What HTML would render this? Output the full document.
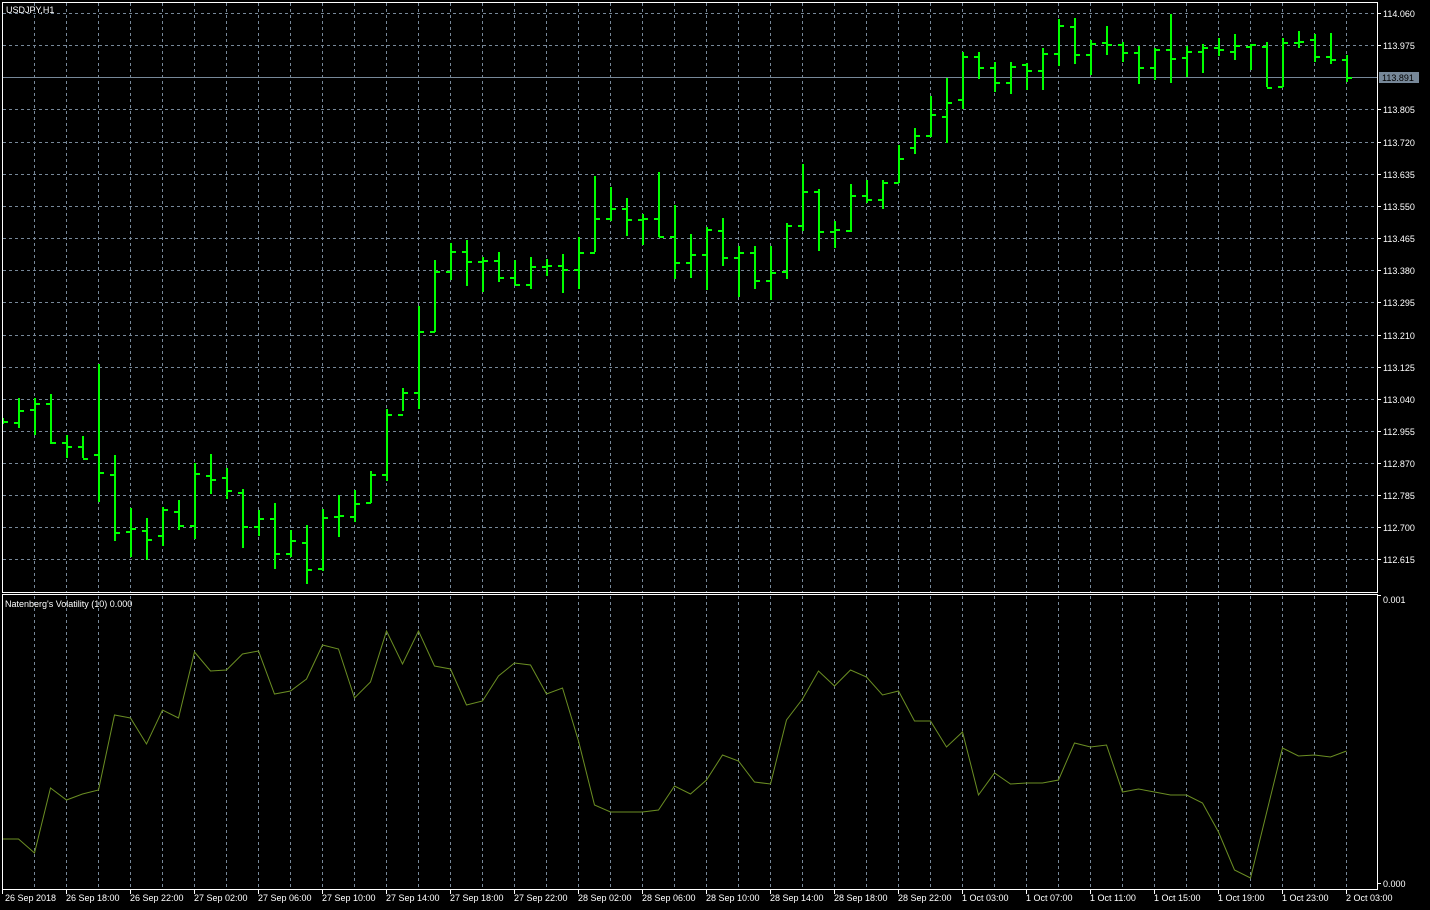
<!DOCTYPE html>
<html><head><meta charset="utf-8"><style>
html,body{margin:0;padding:0;background:#000;}
svg{display:block}
text{font-family:"Liberation Sans",sans-serif;font-size:9px;fill:#fff}
</style></head><body>
<svg width="1430" height="910" viewBox="0 0 1430 910" xmlns="http://www.w3.org/2000/svg">
<rect width="1430" height="910" fill="#000"/>
<defs><clipPath id="mc"><rect x="3" y="3" width="1374" height="589"/></clipPath>
<clipPath id="ic"><rect x="3" y="595" width="1374" height="294"/></clipPath></defs>
<!-- vertical grid -->
<g stroke="#778899" stroke-width="1" stroke-dasharray="3,3" shape-rendering="crispEdges">
<path d="M34.5 3V592M66.5 3V592M98.5 3V592M130.5 3V592M162.5 3V592M194.5 3V592M226.5 3V592M258.5 3V592M290.5 3V592M322.5 3V592M354.5 3V592M386.5 3V592M418.5 3V592M450.5 3V592M482.5 3V592M514.5 3V592M546.5 3V592M578.5 3V592M610.5 3V592M642.5 3V592M674.5 3V592M706.5 3V592M738.5 3V592M770.5 3V592M802.5 3V592M834.5 3V592M866.5 3V592M898.5 3V592M930.5 3V592M962.5 3V592M994.5 3V592M1026.5 3V592M1058.5 3V592M1090.5 3V592M1122.5 3V592M1154.5 3V592M1186.5 3V592M1218.5 3V592M1250.5 3V592M1282.5 3V592M1314.5 3V592M1346.5 3V592"/>
<path d="M34.5 596V889M66.5 596V889M98.5 596V889M130.5 596V889M162.5 596V889M194.5 596V889M226.5 596V889M258.5 596V889M290.5 596V889M322.5 596V889M354.5 596V889M386.5 596V889M418.5 596V889M450.5 596V889M482.5 596V889M514.5 596V889M546.5 596V889M578.5 596V889M610.5 596V889M642.5 596V889M674.5 596V889M706.5 596V889M738.5 596V889M770.5 596V889M802.5 596V889M834.5 596V889M866.5 596V889M898.5 596V889M930.5 596V889M962.5 596V889M994.5 596V889M1026.5 596V889M1058.5 596V889M1090.5 596V889M1122.5 596V889M1154.5 596V889M1186.5 596V889M1218.5 596V889M1250.5 596V889M1282.5 596V889M1314.5 596V889M1346.5 596V889"/>
<path d="M3 13.5H1377M3 45.5H1377M3 109.5H1377M3 142.5H1377M3 174.5H1377M3 206.5H1377M3 238.5H1377M3 270.5H1377M3 302.5H1377M3 335.5H1377M3 367.5H1377M3 399.5H1377M3 431.5H1377M3 463.5H1377M3 495.5H1377M3 527.5H1377M3 559.5H1377"/>
</g>
<!-- current price line -->
<path d="M3 77.5H1377" stroke="#778899" stroke-width="1" shape-rendering="crispEdges"/>
<!-- bars -->
<g clip-path="url(#mc)">
<path fill="none" stroke="#00ff00" stroke-width="2" shape-rendering="crispEdges" d="
M3 418V424M-2 421h5M3 422h5
M19 398V428M14 423h5M19 411h5
M35 398V435M30 410h5M35 404h5
M51 394V444M46 404h5M51 443h5
M67 435V458M62 443h5M67 447h5
M83 436V458M78 447h5M83 459h5
M99 364V502M94 455h5M99 473h5
M115 455V541M110 475h5M115 533h5
M131 508V557M126 532h5M131 529h5
M147 518V560M142 531h5M147 540h5
M163 507V546M158 536h5M163 510h5
M179 500V530M174 512h5M179 526h5
M195 463V539M190 526h5M195 474h5
M211 454V494M206 476h5M211 480h5
M227 468V499M222 478h5M227 491h5
M243 489V548M238 493h5M243 527h5
M259 510V536M254 527h5M259 519h5
M275 503V569M270 519h5M275 554h5
M291 530V557M286 554h5M291 541h5
M307 525V584M302 543h5M307 570h5
M323 509V571M318 569h5M323 518h5
M339 495V537M334 517h5M339 516h5
M355 490V522M350 517h5M355 504h5
M371 471V503M366 503h5M371 475h5
M387 409V481M382 475h5M387 415h5
M403 388V411M398 415h5M403 393h5
M419 306V409M414 393h5M419 332h5
M435 260V332M430 332h5M435 272h5
M451 243V280M446 272h5M451 252h5
M467 240V286M462 252h5M467 262h5
M483 257V292M478 262h5M483 261h5
M499 252V282M494 261h5M499 278h5
M515 260V285M510 278h5M515 285h5
M531 257V289M526 285h5M531 267h5
M547 259V276M542 267h5M547 266h5
M563 254V293M558 266h5M563 270h5
M579 237V289M574 270h5M579 253h5
M595 176V252M590 253h5M595 219h5
M611 187V221M606 219h5M611 209h5
M627 198V236M622 209h5M627 220h5
M643 214V245M638 220h5M643 219h5
M659 172V237M654 219h5M659 237h5
M675 205V279M670 237h5M675 263h5
M691 234V278M686 263h5M691 255h5
M707 227V290M702 255h5M707 230h5
M723 218V266M718 231h5M723 258h5
M739 246V297M734 258h5M739 253h5
M755 246V289M750 253h5M755 281h5
M771 246V300M766 281h5M771 273h5
M787 223V279M782 272h5M787 226h5
M803 164V231M798 226h5M803 192h5
M819 189V251M814 192h5M819 232h5
M835 221V248M830 232h5M835 230h5
M851 184V232M846 231h5M851 196h5
M867 180V203M862 196h5M867 200h5
M883 180V209M878 200h5M883 183h5
M899 145V183M894 183h5M899 159h5
M915 128V154M910 148h5M915 136h5
M931 96V137M926 136h5M931 115h5
M947 78V143M942 117h5M947 103h5
M963 52V109M958 100h5M963 57h5
M979 52V79M974 57h5M979 68h5
M995 62V92M990 68h5M995 83h5
M1011 62V94M1006 83h5M1011 67h5
M1027 63V90M1022 65h5M1027 71h5
M1043 48V90M1038 71h5M1043 54h5
M1059 19V66M1054 54h5M1059 26h5
M1075 18V64M1070 27h5M1075 55h5
M1091 40V75M1086 55h5M1091 44h5
M1107 26V55M1102 43h5M1107 45h5
M1123 42V62M1118 45h5M1123 53h5
M1139 46V84M1134 53h5M1139 68h5
M1155 48V80M1150 68h5M1155 50h5
M1171 14V83M1166 50h5M1171 59h5
M1187 46V77M1182 58h5M1187 52h5
M1203 44V73M1198 52h5M1203 48h5
M1219 38V56M1214 48h5M1219 50h5
M1235 34V60M1230 52h5M1235 46h5
M1251 44V70M1246 47h5M1251 45h5
M1267 42V87M1262 47h5M1267 88h5
M1283 38V87M1278 87h5M1283 43h5
M1299 31V48M1294 43h5M1299 42h5
M1315 34V62M1310 40h5M1315 57h5
M1331 33V64M1326 57h5M1331 60h5
M1347 55V82M1342 60h5M1347 78h5"/>
</g>
<!-- indicator -->
<g clip-path="url(#ic)">
<polyline fill="none" stroke="#6b8e23" stroke-width="1" points="2.5,839 18.5,839 34.5,853 50.5,788 66.5,800 82.5,794 98.5,790 114.5,715 130.5,718 146.5,744 162.5,710 178.5,718 194.5,652 210.5,671 226.5,670 242.5,654 258.5,651 274.5,694 290.5,691 306.5,679 322.5,645 338.5,649 354.5,698 370.5,682 386.5,631 402.5,664 418.5,631 434.5,666 450.5,669 466.5,705 482.5,701 498.5,676 514.5,663 530.5,665 546.5,694 562.5,688 578.5,741 594.5,805 610.5,812 626.5,812 642.5,812 658.5,810 674.5,786 690.5,794 706.5,780 722.5,755 738.5,761 754.5,782 770.5,784 786.5,720 802.5,699 818.5,671 834.5,686 850.5,670 866.5,677 882.5,695 898.5,691 914.5,721 930.5,721 946.5,747 962.5,732 978.5,795 994.5,773 1010.5,784 1026.5,783 1042.5,783 1058.5,780 1074.5,743 1090.5,747 1106.5,745 1122.5,792 1138.5,789 1154.5,792 1170.5,795 1186.5,795 1202.5,803 1218.5,832 1234.5,870 1250.5,878 1266.5,813 1282.5,748 1298.5,756 1314.5,755 1330.5,757 1346.5,751"/>
</g>
<!-- frames -->
<g fill="none" stroke="#fff" stroke-width="1" shape-rendering="crispEdges">
<path d="M2.5 2.5H1377.5V592.5H2.5Z"/>
<path d="M2.5 594.5H1377.5V889.5H2.5Z"/>
<path d="M1377 13.5h4M1377 45.5h4M1377 109.5h4M1377 142.5h4M1377 174.5h4M1377 206.5h4M1377 238.5h4M1377 270.5h4M1377 302.5h4M1377 335.5h4M1377 367.5h4M1377 399.5h4M1377 431.5h4M1377 463.5h4M1377 495.5h4M1377 527.5h4M1377 559.5h4M1377 595.5h4M1377 883.5h4"/>
<path d="M2.5 889V894M66.5 889V894M130.5 889V894M194.5 889V894M258.5 889V894M322.5 889V894M386.5 889V894M450.5 889V894M514.5 889V894M578.5 889V894M642.5 889V894M706.5 889V894M770.5 889V894M834.5 889V894M898.5 889V894M962.5 889V894M1026.5 889V894M1090.5 889V894M1154.5 889V894M1218.5 889V894M1282.5 889V894M1346.5 889V894"/>
</g>
<!-- price labels -->
<g>
<text x="1383" y="17">114.060</text>
<text x="1383" y="49">113.975</text>
<text x="1383" y="113">113.805</text>
<text x="1383" y="146">113.720</text>
<text x="1383" y="178">113.635</text>
<text x="1383" y="210">113.550</text>
<text x="1383" y="242">113.465</text>
<text x="1383" y="274">113.380</text>
<text x="1383" y="306">113.295</text>
<text x="1383" y="339">113.210</text>
<text x="1383" y="371">113.125</text>
<text x="1383" y="403">113.040</text>
<text x="1383" y="435">112.955</text>
<text x="1383" y="467">112.870</text>
<text x="1383" y="499">112.785</text>
<text x="1383" y="531">112.700</text>
<text x="1383" y="563">112.615</text>
<text x="1383" y="603">0.001</text>
<text x="1383" y="887">0.000</text>
</g>
<rect x="1379" y="72" width="40" height="11" fill="#778899"/>
<text x="1382" y="81" style="fill:#000">113.891</text>
<!-- titles -->
<text x="6" y="13">USDJPY,H1</text>
<text x="5" y="607">Natenberg's Volatility (10) 0.000</text>
<!-- time labels -->
<g>
<text x="5" y="901">26 Sep 2018</text>
<text x="66" y="901">26 Sep 18:00</text>
<text x="130" y="901">26 Sep 22:00</text>
<text x="194" y="901">27 Sep 02:00</text>
<text x="258" y="901">27 Sep 06:00</text>
<text x="322" y="901">27 Sep 10:00</text>
<text x="386" y="901">27 Sep 14:00</text>
<text x="450" y="901">27 Sep 18:00</text>
<text x="514" y="901">27 Sep 22:00</text>
<text x="578" y="901">28 Sep 02:00</text>
<text x="642" y="901">28 Sep 06:00</text>
<text x="706" y="901">28 Sep 10:00</text>
<text x="770" y="901">28 Sep 14:00</text>
<text x="834" y="901">28 Sep 18:00</text>
<text x="898" y="901">28 Sep 22:00</text>
<text x="962" y="901">1 Oct 03:00</text>
<text x="1026" y="901">1 Oct 07:00</text>
<text x="1090" y="901">1 Oct 11:00</text>
<text x="1154" y="901">1 Oct 15:00</text>
<text x="1218" y="901">1 Oct 19:00</text>
<text x="1282" y="901">1 Oct 23:00</text>
<text x="1346" y="901">2 Oct 03:00</text>
</g>
</svg>
</body></html>
